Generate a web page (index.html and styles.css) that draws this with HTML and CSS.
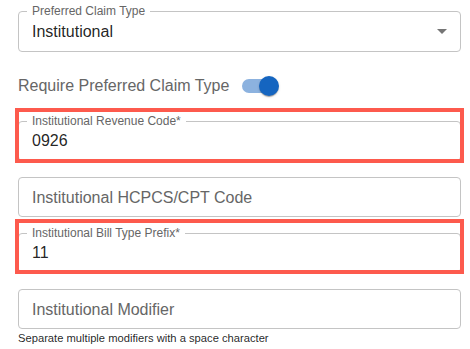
FILE: index.html
```
<!DOCTYPE html>
<html>
<head>
	<title>Claim Settings</title>
	<link rel="stylesheet" href="styles.css">
</head>
<body>
	<form class="claim-form">
		<fieldset class="field select-field">
			<legend><span>Preferred Claim Type</span></legend>
			<div class="select-value">
				<span>Institutional</span>
				<svg class="select-arrow" width="24" height="24" viewBox="0 0 24 24"><path d="M7 10l5 5 5-5z"/></svg>
			</div>
		</fieldset>

		<div class="switch-row">
			<span class="switch-label">Require Preferred Claim Type</span>
			<span class="switch">
				<span class="switch-track"></span>
				<span class="switch-thumb"></span>
			</span>
		</div>

		<div class="highlight first-highlight">
			<fieldset class="field">
				<legend><span>Institutional Revenue Code*</span></legend>
				<div class="field-value">0926</div>
			</fieldset>
		</div>

		<div class="field-wrap">
			<div class="field empty">Institutional HCPCS/CPT Code</div>
		</div>

		<div class="highlight">
			<fieldset class="field">
				<legend><span>Institutional Bill Type Prefix*</span></legend>
				<div class="field-value">11</div>
			</fieldset>
		</div>

		<div class="field-wrap">
			<div class="field empty">Institutional Modifier</div>
		</div>
		<p class="helper">Separate multiple modifiers with a space character</p>
	</form>
</body>
</html>
```

FILE: styles.css
```
body {
	margin: 0;
	background: #fff;
	font-family: "Liberation Sans", Arial, sans-serif;
}
.claim-form {
	display: flex;
	flex-direction: column;
	width: 443px;
	padding: 5px 0 0 18px;
}
.field {
	margin: 0;
	min-width: 0;
	border: 1px solid #c4c4c4;
	border-radius: 4px;
	padding: 0 13px 8px 13px;
	box-sizing: border-box;
}
.field legend {
	margin-left: -5px;
	padding: 0;
	font-size: 12px;
	line-height: 12px;
	color: #666;
}
.field legend span {
	padding: 0 5px;
}
.field-value,
.select-value {
	padding-top: 2px;
	font-size: 16px;
	line-height: 23px;
	color: rgba(0, 0, 0, 0.87);
}
.select-field {
	padding-right: 6px;
}
.select-value {
	display: flex;
	align-items: center;
	justify-content: space-between;
}
.select-arrow {
	fill: #757575;
}
.field-wrap {
	margin-top: 10px;
	padding-top: 6px;
}
.field.empty {
	height: 40px;
	padding: 8px 13px 7px;
	font-size: 16px;
	line-height: 23px;
	color: #666;
}
.switch-row {
	display: flex;
	align-items: center;
	margin-top: 15px;
	height: 38px;
}
.switch-label {
	font-size: 16px;
	color: #666;
}
.switch {
	display: grid;
	align-items: center;
	width: 58px;
	height: 38px;
	margin-left: 1px;
}
.switch-track,
.switch-thumb {
	grid-area: 1 / 1;
}
.switch-track {
	justify-self: center;
	width: 34px;
	height: 14px;
	border-radius: 7px;
	background: #8cb2df;
}
.switch-thumb {
	justify-self: end;
	margin-right: 9px;
	width: 20px;
	height: 20px;
	border-radius: 50%;
	background: #1565c0;
	box-shadow: 0 2px 1px -1px rgba(0,0,0,0.2), 0 1px 1px 0 rgba(0,0,0,0.14), 0 1px 3px 0 rgba(0,0,0,0.12);
}
.highlight {
	position: relative;
	margin-top: 10px;
}
.first-highlight {
	margin-top: 10px;
}
.first-highlight::after {
	top: -7px;
}
.highlight::after {
	content: "";
	position: absolute;
	top: -8px;
	left: -3px;
	right: -3px;
	bottom: -1px;
	border: 4px solid #fd5a4d;
	pointer-events: none;
}
.first-highlight::after {
	top: -7px;
	bottom: -2px;
}
.helper {
	margin: 2px 0 0;
	font-size: 11.2px;
	line-height: 14px;
	color: rgba(0, 0, 0, 0.87);
}
```
